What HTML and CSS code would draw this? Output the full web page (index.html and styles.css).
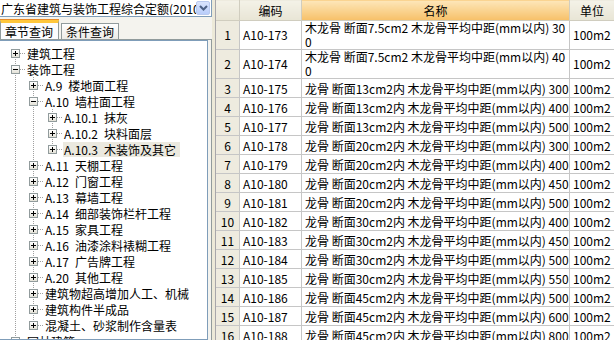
FILE: index.html
```html
<!DOCTYPE html>
<html lang="zh-CN">
<head>
    <meta charset="UTF-8">
    <title>定额查询</title>
    <link rel="stylesheet" href="styles.css">
</head>
<body>
<div class="app">
    <!-- 左侧：定额章节 -->
    <aside class="catalog">
        <div class="combo">
            <span class="combo-text">广东省建筑与装饰工程综合定额(2010)</span>
            <span class="combo-btn">
                <svg width="9" height="6" viewBox="0 0 9 6"><polyline points="1,1 4.5,4.5 8,1" fill="none" stroke="#4d6185" stroke-width="2"/></svg>
            </span>
        </div>
        <div class="tabs">
            <span class="tab active">章节查询</span>
            <span class="tab">条件查询</span>
        </div>
        <div class="tab-page">
            <div class="tree">
                <ul>
                    <li><div class="node"><span class="box plus"></span><span class="dash"></span><span class="label">建筑工程</span></div></li>
                    <li><div class="node"><span class="box minus"></span><span class="dash"></span><span class="label">装饰工程</span></div>
                        <ul>
                            <li><div class="node"><span class="box plus"></span><span class="dash"></span><span class="label">A.9&ensp;楼地面工程</span></div></li>
                            <li><div class="node"><span class="box minus"></span><span class="dash"></span><span class="label">A.10&ensp;墙柱面工程</span></div>
                                <ul class="deep">
                                    <li><div class="node"><span class="box plus"></span><span class="dash"></span><span class="label">A.10.1&ensp;抹灰</span></div></li>
                                    <li><div class="node"><span class="box plus"></span><span class="dash"></span><span class="label">A.10.2&ensp;块料面层</span></div></li>
                                    <li><div class="node"><span class="box plus"></span><span class="dash"></span><span class="label selected">A.10.3&ensp;木装饰及其它</span></div></li>
                                </ul>
                            </li>
                            <li><div class="node"><span class="box plus"></span><span class="dash"></span><span class="label">A.11&ensp;天棚工程</span></div></li>
                            <li><div class="node"><span class="box plus"></span><span class="dash"></span><span class="label">A.12&ensp;门窗工程</span></div></li>
                            <li><div class="node"><span class="box plus"></span><span class="dash"></span><span class="label">A.13&ensp;幕墙工程</span></div></li>
                            <li><div class="node"><span class="box plus"></span><span class="dash"></span><span class="label">A.14&ensp;细部装饰栏杆工程</span></div></li>
                            <li><div class="node"><span class="box plus"></span><span class="dash"></span><span class="label">A.15&ensp;家具工程</span></div></li>
                            <li><div class="node"><span class="box plus"></span><span class="dash"></span><span class="label">A.16&ensp;油漆涂料裱糊工程</span></div></li>
                            <li><div class="node"><span class="box plus"></span><span class="dash"></span><span class="label">A.17&ensp;广告牌工程</span></div></li>
                            <li><div class="node"><span class="box plus"></span><span class="dash"></span><span class="label">A.20&ensp;其他工程</span></div></li>
                            <li><div class="node"><span class="box plus"></span><span class="dash"></span><span class="label">建筑物超高增加人工、机械</span></div></li>
                            <li><div class="node"><span class="box plus"></span><span class="dash"></span><span class="label">建筑构件半成品</span></div></li>
                            <li><div class="node"><span class="box plus"></span><span class="dash"></span><span class="label">混凝土、砂浆制作含量表</span></div></li>
                        </ul>
                    </li>
                    <li><div class="node"><span class="box plus"></span><span class="dash"></span><span class="label">园林建筑</span></div></li>
                </ul>
            </div>
        </div>
    </aside>

    <div class="splitter"></div>

    <!-- 右侧：定额子目 -->
    <main class="grid">
        <table>
            <colgroup>
                <col class="c-no">
                <col class="c-code">
                <col class="c-name">
                <col class="c-unit">
            </colgroup>
            <tr class="head">
                <th></th>
                <th>编码</th>
                <th class="sorted">名称</th>
                <th>单位</th>
            </tr>
            <tr class="tall"><td class="no">1</td><td>A10-173</td><td>木龙骨 断面7.5cm2 木龙骨平均中距(mm以内) 30<br>0</td><td>100m2</td></tr>
            <tr class="tall"><td class="no">2</td><td>A10-174</td><td>木龙骨 断面7.5cm2 木龙骨平均中距(mm以内) 40<br>0</td><td>100m2</td></tr>
            <tr><td class="no">3</td><td>A10-175</td><td>龙骨 断面13cm2内 木龙骨平均中距(mm以内) 300</td><td>100m2</td></tr>
            <tr><td class="no">4</td><td>A10-176</td><td>龙骨 断面13cm2内 木龙骨平均中距(mm以内) 400</td><td>100m2</td></tr>
            <tr><td class="no">5</td><td>A10-177</td><td>龙骨 断面13cm2内 木龙骨平均中距(mm以内) 500</td><td>100m2</td></tr>
            <tr><td class="no">6</td><td>A10-178</td><td>龙骨 断面20cm2内 木龙骨平均中距(mm以内) 300</td><td>100m2</td></tr>
            <tr><td class="no">7</td><td>A10-179</td><td>龙骨 断面20cm2内 木龙骨平均中距(mm以内) 400</td><td>100m2</td></tr>
            <tr><td class="no">8</td><td>A10-180</td><td>龙骨 断面20cm2内 木龙骨平均中距(mm以内) 450</td><td>100m2</td></tr>
            <tr><td class="no">9</td><td>A10-181</td><td>龙骨 断面20cm2内 木龙骨平均中距(mm以内) 500</td><td>100m2</td></tr>
            <tr><td class="no">10</td><td>A10-182</td><td>龙骨 断面30cm2内 木龙骨平均中距(mm以内) 400</td><td>100m2</td></tr>
            <tr><td class="no">11</td><td>A10-183</td><td>龙骨 断面30cm2内 木龙骨平均中距(mm以内) 450</td><td>100m2</td></tr>
            <tr><td class="no">12</td><td>A10-184</td><td>龙骨 断面30cm2内 木龙骨平均中距(mm以内) 500</td><td>100m2</td></tr>
            <tr><td class="no">13</td><td>A10-185</td><td>龙骨 断面30cm2内 木龙骨平均中距(mm以内) 550</td><td>100m2</td></tr>
            <tr><td class="no">14</td><td>A10-186</td><td>龙骨 断面45cm2内 木龙骨平均中距(mm以内) 500</td><td>100m2</td></tr>
            <tr><td class="no">15</td><td>A10-187</td><td>龙骨 断面45cm2内 木龙骨平均中距(mm以内) 600</td><td>100m2</td></tr>
            <tr><td class="no">16</td><td>A10-188</td><td>龙骨 断面45cm2内 木龙骨平均中距(mm以内) 800</td><td>100m2</td></tr>
        </table>
    </main>
</div>
</body>
</html>
```

FILE: styles.css
```css
/* Reset */
* {
    margin: 0;
    padding: 0;
    box-sizing: border-box;
}

body {
    width: 614px;
    height: 340px;
    overflow: hidden;
    background-color: #ece9d8;
    font-family: "Noto Sans CJK SC", sans-serif;
    font-size: 12px;
    color: #000;
}

.app {
    display: flex;
    height: 340px;
}

/* Left panel */
.catalog {
    width: 212px;
    display: flex;
    flex-direction: column;
    background-color: #f4f3ee;
}

.combo {
    display: flex;
    height: 18px;
    margin: -1px 0 0 -2px;
    border: 1px solid #7f9db9;
    background-color: #fff;
    padding: 1px;
}

.combo-text {
    flex: 1;
    overflow: hidden;
    white-space: nowrap;
    line-height: 15px;
    padding-left: 1px;
}

.combo-btn {
    width: 14px;
    display: flex;
    align-items: center;
    justify-content: center;
    border: 1px solid #b9c9ef;
    border-radius: 2px;
    background: linear-gradient(#d9e4fd, #b9cdfa);
}

/* Tabs */
.tabs {
    display: flex;
    align-items: flex-end;
    height: 22px;
}

.tab {
    height: 16px;
    padding: 0 4px;
    margin-right: 2px;
    line-height: 15px;
    border: 1px solid #919b9c;
    border-bottom: none;
    background: linear-gradient(#fff, #ecebe6);
}

.tab.active {
    height: 20px;
    padding: 0 5px 0 4px;
    margin-bottom: -1px;
    line-height: 17px;
    border-top: 3px solid #ffc73c;
    box-shadow: 0 -1px 0 #e68b2c;
    background: #fcfcfe;
}

.tab-page {
    flex: 1;
    border-top: 1px solid #919b9c;
    border-right: 1px solid #919b9c;
    padding-right: 3px;
    min-height: 0;
}

/* Tree */
.tree {
    height: 100%;
    background-color: #fff;
    border: 1px solid #7f9db9;
    border-left: none;
    padding-top: 4px;
    overflow: hidden;
}

.tree ul {
    list-style: none;
    padding-left: 11px;
}

.tree ul ul {
    padding-left: 18px;
}

.tree ul ul.deep {
    padding-left: 19px;
}

.tree li {
    background: repeating-linear-gradient(#a0a0a0 0 1px, transparent 1px 2px) no-repeat 4px 0 / 1px 100%;
}

.tree > ul > li:first-child {
    background-position: 4px 8px;
}

.tree li:last-child {
    background-size: 1px 8px;
}

.node {
    display: flex;
    align-items: center;
    height: 16px;
    white-space: nowrap;
}

.box {
    width: 9px;
    height: 9px;
    border: 1px solid #919b9c;
    background: linear-gradient(#fff, #e4e2d8);
    display: flex;
    align-items: center;
    justify-content: center;
    flex-shrink: 0;
}

.box::before {
    content: "";
    width: 5px;
    height: 1px;
    background-color: #000;
}

.box.plus {
    background:
        linear-gradient(#000, #000) no-repeat center / 1px 5px,
        linear-gradient(#fff, #e4e2d8);
}

.dash {
    width: 5px;
    margin-right: 1px;
    height: 1px;
    background: repeating-linear-gradient(90deg, #a0a0a0 0 1px, transparent 1px 2px);
}

.label {
    padding: 0 1px;
    line-height: 15px;
}

.label.selected {
    background-color: #ebe9df;
    padding-right: 4px;
}

/* Splitter */
.splitter {
    width: 3px;
}

/* Grid */
.grid {
    flex: 1;
    overflow: hidden;
    border-left: 1px solid #a7a6aa;
    background-color: #fff;
}

table {
    border-collapse: collapse;
    table-layout: fixed;
    width: 399px;
    margin-top: -1px;
    margin-left: -1px;
}

.c-no { width: 24px; }
.c-code { width: 62px; }
.c-name { width: 268px; }
.c-unit { width: 45px; }

th, td {
    border: 1px solid #c6c6c6;
    padding: 0 3px;
    white-space: nowrap;
    overflow: hidden;
    line-height: 13px;
    text-align: left;
    font-weight: normal;
    vertical-align: middle;
}

tr { height: 19px; }
tr.head { height: 21px; }
tr.tall { height: 29px; }
tr.tall td { line-height: 14px; }

th {
    text-align: center;
    background: linear-gradient(#f4f2e8, #e8e5d5);
    border-color: #d0cdbf;
}

th.sorted {
    background: linear-gradient(#fde7ba, #f7c068);
}

td.no {
    text-align: center;
    padding: 0;
    background-color: #eeebdf;
}
```
